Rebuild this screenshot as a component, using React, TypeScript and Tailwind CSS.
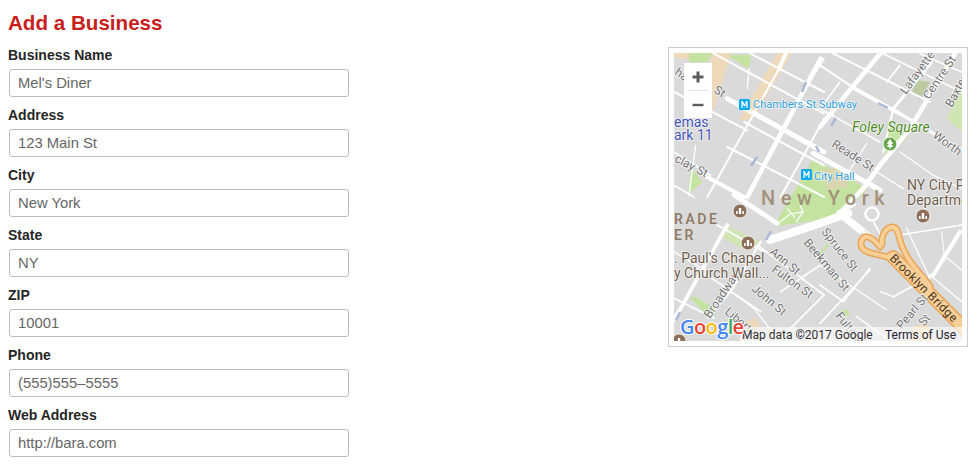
const fields = [
  { label: "Business Name", value: "Mel's Diner" },
  { label: "Address", value: "123 Main St" },
  { label: "City", value: "New York" },
  { label: "State", value: "NY" },
  { label: "ZIP", value: "10001" },
  { label: "Phone", value: "(555)555–5555" },
  { label: "Web Address", value: "http://bara.com" },
];

// road = [x1, y1, x2, y2, width], traced per part of the map at 3x
type Road = number[];

const quarters: { x: number; y: number; roads: Road[] }[] = [
  {
    x: 664,
    y: 42,
    roads: [
      [190, 170, 480, 330, 15],
      [30, 150, 250, 265, 6],
      [150, 35, 480, 215, 6],
      [260, 35, 480, 150, 6],
      [190, 315, 480, 465, 6],
      [120, 400, 240, 465, 12],
      [240, 240, 480, 370, 6],
      [30, 430, 90, 465, 5],
      [250, 465, 470, 50, 14],
      [130, 465, 345, 80, 6],
      [345, 80, 365, 35, 12],
      [75, 460, 95, 310, 4],
      [255, 80, 250, 140, 4],
      [350, 465, 480, 230, 6],
      [430, 130, 480, 50, 5],
      [30, 330, 140, 400, 5],
    ],
  },
  {
    x: 820,
    y: 42,
    roads: [
      [180, 35, 60, 180, 14],
      [60, 180, 0, 255, 14],
      [405, 35, 270, 260, 14],
      [270, 260, 180, 370, 14],
      [180, 370, 130, 440, 14],
      [335, 60, 220, 200, 9],
      [220, 200, 190, 330, 6],
      [0, 70, 105, 140, 6],
      [105, 140, 240, 215, 12],
      [240, 215, 425, 325, 9],
      [40, 35, 330, 180, 6],
      [190, 35, 425, 150, 5],
      [300, 35, 425, 90, 5],
      [0, 200, 180, 300, 5],
      [240, 330, 340, 400, 4],
      [340, 400, 425, 440, 4],
      [170, 390, 250, 440, 4],
      [60, 120, 0, 200, 5],
      [240, 70, 200, 120, 5],
      [140, 305, 80, 400, 4],
    ],
  },
  {
    x: 664,
    y: 195,
    roads: [
      [190, 90, 50, 340, 11],
      [50, 340, 0, 420, 11],
      [210, 0, 340, 85, 14],
      [160, 90, 300, 170, 5],
      [290, 140, 200, 290, 7],
      [200, 290, 130, 370, 5],
      [280, 150, 480, 300, 5],
      [100, 220, 290, 350, 5],
      [30, 310, 150, 370, 5],
      [200, 290, 270, 340, 4],
      [270, 340, 340, 430, 4],
      [350, 290, 470, 210, 5],
      [350, 430, 480, 300, 5],
      [30, 170, 130, 230, 4],
    ],
  },
  {
    x: 820,
    y: 195,
    roads: [
      [420, 110, 340, 240, 12],
      [240, 120, 425, 90, 4],
      [0, 270, 70, 320, 5],
      [70, 320, 150, 220, 5],
      [0, 385, 150, 225, 5],
      [180, 290, 220, 305, 4],
      [220, 305, 340, 240, 5],
      [0, 210, 200, 345, 4],
      [110, 365, 200, 430, 4],
      [370, 180, 425, 225, 4],
      [330, 240, 425, 320, 4],
      [365, 110, 375, 200, 3],
      [260, 100, 330, 250, 4],
    ],
  },
  // around the park
  {
    x: 770,
    y: 120,
    roads: [
      [130, 100, 330, 210, 15],
      [280, 205, 200, 290, 14],
      [0, 360, 120, 320, 24],
      [120, 320, 235, 280, 24],
    ],
  },
  // ramps at the foot of the bridge
  {
    x: 840,
    y: 200,
    roads: [
      [0, 40, 60, 90, 22],
      [60, 90, 125, 130, 9],
      [40, 60, 120, 125, 4],
      [0, 35, 45, 15, 8],
      [100, 65, 125, 110, 5],
    ],
  },
];

const green = "#c5e3a0";
const tan = "#efd9bb";

type Label = { t: string; x: number; y: number; r?: number; c?: string; s?: number };

const streetLabels: Label[] = [
  { t: "Reade St", x: 831, y: 146, r: 33 },
  { t: "Worth", x: 932, y: 137, r: 36 },
  { t: "Lafayette", x: 906, y: 95, r: -54 },
  { t: "Centre St", x: 929, y: 100, r: -56 },
  { t: "Baxter", x: 952, y: 108, r: -62 },
  { t: "clay St", x: 674, y: 161, r: 28 },
  { t: "ha", x: 674, y: 74, r: 35 },
  { t: "St", x: 713, y: 92, r: 32 },
  { t: "Ann St", x: 769, y: 253, r: 40 },
  { t: "Fulton St", x: 771, y: 271, r: 36 },
  { t: "John St", x: 751, y: 290, r: 40 },
  { t: "Broadway", x: 710, y: 319, r: -56 },
  { t: "Liberty", x: 724, y: 313, r: 40 },
  { t: "Beekman St", x: 803, y: 243, r: 50 },
  { t: "Spruce St", x: 821, y: 232, r: 52 },
  { t: "Fulton", x: 835, y: 316, r: 52 },
  { t: "Pearl St", x: 902, y: 330, r: -50 },
  { t: "St", x: 924, y: 327, r: -50 },
];

const placeLabels: Label[] = [
  { t: "emas", x: 674, y: 127, c: "#3f51b5", s: 14 },
  { t: "ark 11", x: 674, y: 140, c: "#3f51b5", s: 14 },
  { t: "Chambers St Subway", x: 753, y: 108, c: "#2c9bd6", s: 11 },
  { t: "City Hall", x: 814, y: 180, c: "#2c9bd6", s: 11 },
  { t: ". Paul's Chapel", x: 674, y: 263, c: "#6b5a4a", s: 14 },
  { t: "y Church Wall...", x: 674, y: 278, c: "#6b5a4a", s: 14 },
  { t: "NY City P", x: 907, y: 190, c: "#6b5a4a", s: 14 },
  { t: "Departme", x: 907, y: 205, c: "#6b5a4a", s: 14 },
];

function Poi({ x, y }: { x: number; y: number }) {
  return (
    <g>
      <circle cx={x} cy={y} r={7} fill="#8d6e57" stroke="#fff" strokeWidth={0.8} />
      <path
        d={`M${x - 4} ${y + 3}v-3h1.6v3zM${x - 1.2} ${y + 3}v-6h2.4v6zM${x + 2.4} ${y + 3}v-3h1.6v3z`}
        fill="#fff"
      />
    </g>
  );
}

function Metro({ x, y }: { x: number; y: number }) {
  return (
    <g>
      <rect x={x} y={y} width={11} height={11} rx={1.5} fill="#03a9f4" />
      <path
        d={`M${x + 2.4} ${y + 9}v-7h1.3l1.8 3.6 1.8-3.6h1.3v7h-1.3v-4.4l-1.4 2.8h-.8l-1.4-2.8v4.4z`}
        fill="#fff"
      />
    </g>
  );
}

function MapPicture() {
  return (
    <svg viewBox="674 53 288 288" className="block w-[288px] h-[288px]">
      <rect x="674" y="53" width="288" height="288" fill="#dadada" />

      {/* tan blocks */}
      <polygon points="777,53 792,53 752,120 739,120" fill={tan} />
      <polygon points="712,53 731,53 712,115 700,115" fill={tan} />
      <polygon points="674,53 689,53 689,60 674,57" fill={tan} />
      <polygon points="746,323 754,317 761,327 752,338" fill={tan} />
      <polygon points="913,327 927,323 933,341 910,341" fill="#f6d7ae" />

      {/* parks */}
      <polygon points="689,53 712,53 707,62 689,62" fill={green} />
      <polygon points="727,55 751,55 749,69" fill={green} />
      <polygon points="688,195 702,182 691,167" fill={green} />
      <polygon points="813,159 868,189 838,217 778,226 776,222" fill={green} />
      <polygon points="820,170 840,167 850,187 827,190" fill="#d8d6ae" />
      <polygon points="726,225 761,242 744,250 722,237" fill="#cfe6b4" />
      <polygon points="689,297 696,297 717,310 709,317" fill={green} />
      <polygon points="888,122 908,137 885,159" fill={green} />
      <polygon points="962,82 947,119 962,132" fill="#cfe6b4" />
      <polygon points="917,80 930,82 920,100 912,92" fill="#bccb9f" />
      <polygon points="820,252 828,243 828,247 820,255" fill={green} />
      <polygon points="840,310 848,310 850,315 845,317" fill={green} />

      {quarters.map((q) => (
        <g key={`${q.x}-${q.y}`} transform={`translate(${q.x} ${q.y}) scale(0.3333)`}>
          {q.roads.map((r, i) => (
            <line
              key={i}
              x1={r[0]}
              y1={r[1]}
              x2={r[2]}
              y2={r[3]}
              stroke="#fff"
              strokeWidth={r[4]}
              strokeLinecap="round"
            />
          ))}
        </g>
      ))}

      {/* paths in the park and the ramp loop */}
      <path
        d="M780 222 L790 214 L803 212 L796 222 M787 208 L795 218 M803 212 L800 205"
        fill="none"
        stroke="#fff"
        strokeWidth="1.2"
      />
      <circle cx="872" cy="214" r="6.5" fill="none" stroke="#fff" strokeWidth="2.6" />

      {/* one way arrows */}
      <path d="M802 92 L806 82 M751 166 L757 157 M819 152 L816 146" stroke="#aab8d8" strokeWidth="2.5" fill="none" />
      <path d="M878 103 L888 108 M831 126 L836 118 M766 240 L771 231 M676 320 L680 312" stroke="#aab8d8" strokeWidth="2.5" fill="none" />

      {/* bridge */}
      {[
        { c: "#e8a65a", w: 14 },
        { c: "#f8cf96", w: 11 },
      ].map((b) => (
        <g key={b.c} fill="none" stroke={b.c} strokeLinecap="round" strokeLinejoin="round">
          <path d="M972 336 L893 257" strokeWidth={b.w} />
          <path
            d="M880 247 C876 241 870 236 865 237 C860 239 860 246 863 249 C868 254 878 254 887 257"
            strokeWidth={b.w - 7}
          />
          <path
            d="M882 244 C881 236 885 228 892 227 C897 227 898 232 899 236 C901 246 906 256 912 264 L930 286"
            strokeWidth={b.w - 7}
          />
        </g>
      ))}

      <text
        x="889"
        y="259"
        transform="rotate(45 889 259)"
        fontFamily="Roboto, sans-serif"
        fontSize="12"
        fill="#4a3423"
        letterSpacing="0.45"
      >
        Brooklyn Bridge
      </text>

      {streetLabels.map((l) => (
        <text
          key={l.t + l.x}
          x={l.x}
          y={l.y}
          transform={`rotate(${l.r} ${l.x} ${l.y})`}
          fontFamily="Roboto, sans-serif"
          fontSize="12"
          fill="#707070"
          stroke="#fff"
          strokeWidth="1.2"
          paintOrder="stroke"
        >
          {l.t}
        </text>
      ))}

      {placeLabels.map((l) => (
        <text
          key={l.t}
          x={l.x}
          y={l.y}
          fontFamily="Roboto, sans-serif"
          fontSize={l.s}
          fill={l.c}
          stroke="#fff"
          strokeWidth="1.2"
          paintOrder="stroke"
        >
          {l.t}
        </text>
      ))}

      <text
        x="852"
        y="132"
        fontFamily="Roboto, sans-serif"
        fontSize="14"
        fontStyle="italic"
        fill="#4b8a1c"
        stroke="#fff"
        strokeWidth="1.2"
        paintOrder="stroke"
      >
        Foley Square
      </text>
      <circle cx="890" cy="144" r="7" fill="#6aa84f" stroke="#fff" strokeWidth="1" />
      <path d="M890 139 l3.2 5 h-2 l2 3 h-2.4 v1.6 h-1.6 v-1.6 h-2.4 l2 -3 h-2z" fill="#fff" />

      <text x="761" y="205" fontFamily="Roboto, sans-serif" fontWeight="500" fontSize="20" letterSpacing="5.5" fill="#a3927a">
        New York
      </text>
      <text x="674" y="224" fontFamily="Roboto, sans-serif" fontWeight="500" fontSize="14" letterSpacing="2.6" fill="#8d7860">
        RADE
      </text>
      <text x="674" y="240" fontFamily="Roboto, sans-serif" fontWeight="500" fontSize="14" letterSpacing="2.6" fill="#8d7860">
        ER
      </text>

      <Poi x={740} y={211} />
      <Poi x={748} y={243} />
      <Poi x={679} y={341} />
      <Poi x={923} y={216} />
      <Metro x={739} y={99} />
      <Metro x={801} y={169} />

      {/* attribution */}
      <rect x="740" y="327" width="222" height="14" fill="#fff" fillOpacity="0.62" />
      <text x="742" y="339" fontFamily="Roboto, sans-serif" fontSize="12" fill="#333">
        Map data ©2017 Google
      </text>
      <text x="885" y="339" fontFamily="Roboto, sans-serif" fontSize="12" fill="#223">
        Terms of Use
      </text>

      <text
        x="680"
        y="334"
        fontFamily="'Open Sans', sans-serif"
        fontSize="20"
        fontWeight="600"
        stroke="#fff"
        strokeWidth="2"
        paintOrder="stroke"
        letterSpacing="-0.6"
      >
        <tspan fill="#4285f4">G</tspan>
        <tspan fill="#ea4335">o</tspan>
        <tspan fill="#fbbc05">o</tspan>
        <tspan fill="#4285f4">g</tspan>
        <tspan fill="#34a853">l</tspan>
        <tspan fill="#ea4335">e</tspan>
      </text>
    </svg>
  );
}

export default function App() {
  return (
    <div className="flex justify-between pl-2 pr-[10px] font-['Liberation_Sans',Arial,sans-serif] bg-white">
      <form className="w-[341px]">
        <h1 className="h-[45px] leading-[46px] text-[20.6px] font-bold text-[#c9201c]">Add a Business</h1>
        {fields.map((f) => (
          <div key={f.label} className="mb-2">
            <label className="block h-5 mb-1 text-sm leading-5 font-bold text-[#262626]">{f.label}</label>
            <input
              readOnly
              value={f.value}
              className="block ml-px w-[340px] h-7 px-2 text-[14.8px] text-[#666] border border-[#bdbdbd] rounded-[3px] outline-none"
            />
          </div>
        ))}
      </form>

      <div className="relative mt-[47px] w-[300px] h-[300px] p-[5px] border border-[#ccc] box-border">
        <MapPicture />
        <div className="absolute left-[15px] top-[15px] w-[28px] h-[55px] bg-white flex flex-col items-center">
          <div className="flex-1 flex items-center justify-center w-full">
            <svg viewBox="0 0 12 12" className="w-3 h-3">
              <path d="M4.5 0.5h3v4h4v3h-4v4h-3v-4h-4v-3h4z" fill="#5c5c5c" />
            </svg>
          </div>
          <div className="w-5 h-px bg-[#e6e6e6]" />
          <div className="flex-1 flex items-center justify-center w-full">
            <svg viewBox="0 0 12 12" className="w-3 h-3">
              <path d="M0.5 4.8h11v2.4h-11z" fill="#5c5c5c" />
            </svg>
          </div>
        </div>
      </div>
    </div>
  );
}
